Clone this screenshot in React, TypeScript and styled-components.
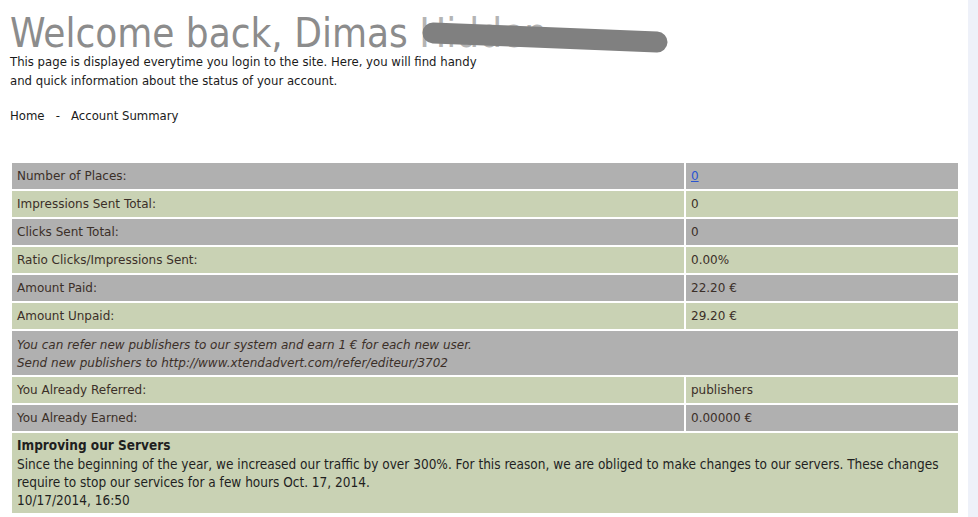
import React, { FC } from 'react'
import styled, { createGlobalStyle } from 'styled-components';

const GlobalStyle = createGlobalStyle`
    html, body {
        margin: 0;
        padding: 0;
        background: #ffffff;
    }
    body {
        font-family: 'DejaVu Sans', Verdana, sans-serif;
    }
`;

const Page = styled.div`
    display: flex;
    flex-direction: row;
    width: 978px;
    min-height: 517px;
`;

const Content = styled.div`
    flex: 1;
    padding: 14px 0 0 10px;
    background: #ffffff;
`;

const SideStrip = styled.div`
    width: 10px;
    background: #eef1f9;
`;

const Title = styled.h1`
    margin: 0;
    font-family: 'DejaVu Sans Condensed', 'DejaVu Sans', sans-serif;
    font-weight: normal;
    font-size: 40px;
    line-height: 38px;
    color: #8c8c8c;
    white-space: nowrap;
`;

const Hidden = styled.span`
    position: relative;
    display: inline-block;
    color: #b4b4b4;
`;

const Blot = styled.svg`
    position: absolute;
    left: -2px;
    top: -2px;
`;

const Intro = styled.p`
    margin: 0;
    width: 478px;
    font-family: 'DejaVu Sans Condensed', 'DejaVu Sans', sans-serif;
    font-size: 13px;
    line-height: 19px;
    color: #1a1a1a;
`;

const Crumbs = styled.div`
    margin-top: 16px;
    font-family: 'DejaVu Sans Condensed', 'DejaVu Sans', sans-serif;
    font-size: 13px;
    line-height: 19px;
    color: #1a1a1a;
`;

const Table = styled.table`
    margin-top: 36px;
    width: 950px;
    border-collapse: separate;
    border-spacing: 2px;
    font-size: 12px;
    color: #3b2f28;
`;

const Row = styled.tr<{ $tone: 'gray' | 'green' }>`
    background: ${p => (p.$tone === 'gray' ? '#b0b0b0' : '#c9d2b4')};
`;

const Cell = styled.td<{ $tall?: boolean }>`
    height: ${p => (p.$tall ? '44px' : '26px')};
    padding: 0 5px;
    vertical-align: middle;
    box-sizing: border-box;
    line-height: 18px;
`;

const LabelCell = styled(Cell)`
    width: 672px;
`;

const Note = styled(Cell)`
    font-style: italic;
    padding-top: 2px;
`;

const News = styled.td`
    padding: 3px 5px 4px;
    font-family: 'DejaVu Sans Condensed', 'DejaVu Sans', sans-serif;
    font-size: 13.5px;
    line-height: 18px;
    color: #1f1f1f;
`;

const NewsTitle = styled.div`
    font-weight: bold;
    margin-bottom: 1px;
`;

const Link = styled.a`
    color: #2a55d0;
    text-decoration: underline;
`;

type Stat = { label: string; value: React.ReactNode; tone: 'gray' | 'green' };

const stats: Stat[] = [
    { label: 'Number of Places:', value: <Link href="#">0</Link>, tone: 'gray' },
    { label: 'Impressions Sent Total:', value: '0', tone: 'green' },
    { label: 'Clicks Sent Total:', value: '0', tone: 'gray' },
    { label: 'Ratio Clicks/Impressions Sent:', value: '0.00%', tone: 'green' },
    { label: 'Amount Paid:', value: '22.20 €', tone: 'gray' },
    { label: 'Amount Unpaid:', value: '29.20 €', tone: 'green' },
];

const referral: Stat[] = [
    { label: 'You Already Referred:', value: 'publishers', tone: 'green' },
    { label: 'You Already Earned:', value: '0.00000 €', tone: 'gray' },
];

const App: FC = () => {
    return (
        <Page>
            <GlobalStyle />
            <Content>
                <Title>
                    Welcome back, Dimas{' '}
                    <Hidden>
                        Hidden
                        <Blot width="262" height="44" viewBox="0 0 262 44">
                            <path d="M16 21 L240 30" stroke="#808080" strokeWidth="21" strokeLinecap="round" fill="none" />
                        </Blot>
                    </Hidden>
                </Title>
                <Intro>
                    This page is displayed everytime you login to the site. Here, you will find handy
                    and quick information about the status of your account.
                </Intro>
                <Crumbs>Home&nbsp;&nbsp; -&nbsp;&nbsp; Account Summary</Crumbs>
                <Table>
                    <tbody>
                        {stats.map(s => (
                            <Row key={s.label} $tone={s.tone}>
                                <LabelCell>{s.label}</LabelCell>
                                <Cell>{s.value}</Cell>
                            </Row>
                        ))}
                        <Row $tone="gray">
                            <Note colSpan={2} $tall>
                                You can refer new publishers to our system and earn 1 € for each new user.<br />
                                Send new publishers to http://www.xtendadvert.com/refer/editeur/3702
                            </Note>
                        </Row>
                        {referral.map(s => (
                            <Row key={s.label} $tone={s.tone}>
                                <LabelCell>{s.label}</LabelCell>
                                <Cell>{s.value}</Cell>
                            </Row>
                        ))}
                        <Row $tone="green">
                            <News colSpan={2}>
                                <NewsTitle>Improving our Servers</NewsTitle>
                                Since the beginning of the year, we increased our traffic by over 300%. For this reason, we are obliged to make changes to our servers. These changes require to stop our services for a few hours Oct. 17, 2014.
                                <br />
                                10/17/2014, 16:50
                            </News>
                        </Row>
                    </tbody>
                </Table>
            </Content>
            <SideStrip />
        </Page>
    )
}

export default App;
